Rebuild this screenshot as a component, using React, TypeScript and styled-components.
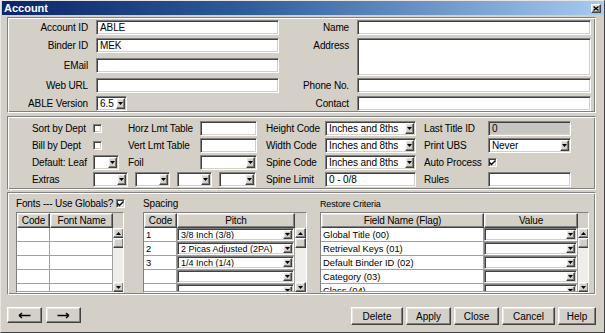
import React from "react";
import styled, { createGlobalStyle, css } from "styled-components";

const GlobalStyle = createGlobalStyle`
  html, body {
    margin: 0;
    padding: 0;
    background: #d4d0c8;
  }
  body {
    font-family: "Liberation Sans", Arial, sans-serif;
    font-size: 10px;
    color: #000;
  }
  * {
    box-sizing: border-box;
  }
`;

const sunken = css`
  border: 1px solid;
  border-color: #808080 #ffffff #ffffff #808080;
  box-shadow: inset 1px 1px 0 #404040, inset -1px -1px 0 #d4d0c8;
`;

const raised = css`
  border: 1px solid;
  border-color: #ffffff #404040 #404040 #ffffff;
  box-shadow: inset -1px -1px 0 #808080, inset 1px 1px 0 #e8e6e2;
  background: #d4d0c8;
`;

const Window = styled.div`
  width: 605px;
  height: 333px;
  background: #d4d0c8;
  border: 1px solid;
  border-color: #e8e6e2 #404040 #404040 #e8e6e2;
  padding: 0 1px 1px 1px;
  display: flex;
  flex-direction: column;
  overflow: hidden;
`;

const TitleBar = styled.div`
  height: 14px;
  background: linear-gradient(90deg, #0a246a 0%, #2d5c9a 40%, #a6caf0 100%);
  display: flex;
  align-items: center;
  justify-content: space-between;
  padding: 0 2px 0 2px;
`;

const Title = styled.span`
  color: #fff;
  font-weight: bold;
  font-size: 11px;
  line-height: 14px;
`;

const CloseBox = styled.div`
  ${raised};
  width: 10px;
  height: 9px;
  display: flex;
  align-items: center;
  justify-content: center;
`;

const Body = styled.div`
  flex: 1;
  padding: 0 7px 0 5px;
  display: flex;
  flex-direction: column;
`;

const Group = styled.div<{ $mt: number; $pt: number; $pb: number; $pl: number }>`
  margin-top: ${(p) => p.$mt}px;
  padding: ${(p) => p.$pt}px 0 ${(p) => p.$pb}px ${(p) => p.$pl}px;
  border: 1px solid #808080;
  border-right-color: #fff;
  border-bottom-color: #fff;
  box-shadow: inset 1px 1px 0 #fff, inset -1px -1px 0 #808080;
`;

const InfoGrid = styled.div`
  display: grid;
  grid-template-columns: 79px 183px 62px 234px;
  grid-template-rows: 18px 20px 20px 18px 15px;
  column-gap: 8px;
  align-items: start;
`;

const OptionGrid = styled.div`
  display: grid;
  grid-template-columns: 61px 35px 72px 57px 68px 91px 72px 83px;
  grid-template-rows: 17px 17px 17px 15px;
  align-items: start;
`;

const Label = styled.span<{ $right?: boolean; $pl?: number }>`
  font-size: 10px;
  line-height: 15px;
  letter-spacing: -0.15px;
  white-space: nowrap;
  text-align: ${(p) => (p.$right ? "right" : "left")};
  padding-left: ${(p) => p.$pl ?? 0}px;
`;

const Input = styled.input<{ $w?: number; $off?: boolean }>`
  ${sunken};
  width: ${(p) => (p.$w ? `${p.$w}px` : "100%")};
  height: 15px;
  margin: 0;
  padding: 0 3px;
  font: inherit;
  font-size: 10px;
  letter-spacing: -0.1px;
  color: #000;
  outline: none;
  background: ${(p) => (p.$off ? "#c6c5c2" : "#fff")};
`;

const Memo = styled.textarea`
  ${sunken};
  grid-row: span 2;
  width: 100%;
  height: 38px;
  margin: 0;
  resize: none;
  outline: none;
  background: #fff;
  font: inherit;
`;

const Combo = styled.div<{ $w?: number; $h?: number }>`
  ${sunken};
  width: ${(p) => (p.$w ? `${p.$w}px` : "100%")};
  height: ${(p) => p.$h ?? 15}px;
  background: #fff;
  display: flex;
  align-items: stretch;
  padding: 1px;
`;

const ComboText = styled.span<{ $small?: boolean }>`
  flex: 1;
  padding-left: 2px;
  font-size: ${(p) => (p.$small ? 9 : 10)}px;
  letter-spacing: ${(p) => (p.$small ? 0 : -0.1)}px;
  line-height: 11px;
  white-space: nowrap;
  overflow: hidden;
`;

const ArrowBtn = styled.span`
  ${raised};
  width: 9px;
  flex: none;
  display: flex;
  align-items: center;
  justify-content: center;
`;

const CheckCell = styled.div`
  height: 15px;
  display: flex;
  align-items: center;
`;

const Box = styled.span`
  ${sunken};
  width: 9px;
  height: 9px;
  background: #fff;
  display: inline-flex;
  align-items: center;
  justify-content: center;
`;

const ExtrasRow = styled.div`
  grid-column: span 3;
  display: flex;
  gap: 7px;
`;

const LowerRow = styled.div`
  display: flex;
`;

const Pane = styled.div<{ $w: number; $ml: number }>`
  width: ${(p) => p.$w}px;
  margin-left: ${(p) => p.$ml}px;
  display: flex;
  flex-direction: column;
`;

const PaneHead = styled.div<{ $small?: boolean }>`
  height: 16px;
  display: flex;
  align-items: center;
  gap: 3px;
  white-space: nowrap;
  letter-spacing: -0.15px;
  font-size: ${(p) => (p.$small ? 9 : 10)}px;
  padding-bottom: 1px;
`;

const Table = styled.div<{ $cols: string }>`
  height: 81px;
  border: 1px solid;
  border-color: #808080 #fff #fff #808080;
  background: #fff;
  display: grid;
  grid-template-columns: ${(p) => p.$cols} 11px;
  grid-template-rows: 15px 14px 14px 14px 14px 8px;
  overflow: hidden;
`;

const HeadCell = styled.div`
  ${raised};
  font-size: 10px;
  line-height: 13px;
  letter-spacing: -0.15px;
  text-align: center;
  white-space: nowrap;
  overflow: hidden;
`;

const HeadBlank = styled.div`
  background: #d4d0c8;
`;

const Cell = styled.div<{ $pad?: boolean }>`
  border-right: 1px solid #a0a0a0;
  border-bottom: 1px solid #a0a0a0;
  font-size: 9.4px;
  line-height: 13px;
  padding: ${(p) => (p.$pad ? "0 2px" : "0")};
  white-space: nowrap;
  overflow: hidden;
`;

const ScrollBar = styled.div`
  grid-column: -2;
  grid-row: 2 / -1;
  background: #efeeea;
  display: flex;
  flex-direction: column;
`;

const ScrollBtn = styled.span`
  ${raised};
  height: 10px;
  flex: none;
  display: flex;
  align-items: center;
  justify-content: center;
`;

const Track = styled.span`
  flex: 1;
`;

const Footer = styled.div`
  margin-top: 12px;
  display: flex;
  justify-content: space-between;
  align-items: flex-start;
`;

const ButtonSet = styled.div<{ $gap: number }>`
  display: flex;
  gap: ${(p) => p.$gap}px;
`;

const Button = styled.button<{ $w: number; $h: number }>`
  ${raised};
  width: ${(p) => p.$w}px;
  height: ${(p) => p.$h}px;
  margin: 0;
  padding: 0;
  font: inherit;
  font-size: 10px;
  color: #000;
  display: flex;
  align-items: center;
  justify-content: center;
`;

const Down = () => (
  <svg width="5" height="3" viewBox="0 0 5 3">
    <path d="M0 0H5L2.5 3Z" fill="#000" />
  </svg>
);

const Up = () => (
  <svg width="5" height="3" viewBox="0 0 5 3">
    <path d="M0 3H5L2.5 0Z" fill="#000" />
  </svg>
);

const Tick = () => (
  <svg width="7" height="6" viewBox="0 0 7 6">
    <path d="M0.5 2.5L2.5 4.5L6.5 0.5" stroke="#000" strokeWidth="1.4" fill="none" />
  </svg>
);

const Arrow = ({ left }: { left?: boolean }) => (
  <svg width="13" height="7" viewBox="0 0 13 7">
    {left ? (
      <path d="M1 3.5H12.5M1 3.5L4 1M1 3.5L4 6" stroke="#000" strokeWidth="1.3" fill="none" />
    ) : (
      <path d="M0.5 3.5H12M12 3.5L9 1M12 3.5L9 6" stroke="#000" strokeWidth="1.3" fill="none" />
    )}
  </svg>
);

function Select({ value = "", w, h }: { value?: string; w?: number; h?: number }) {
  return (
    <Combo $w={w} $h={h}>
      <ComboText $small={h !== undefined}>{value}</ComboText>
      <ArrowBtn>
        <Down />
      </ArrowBtn>
    </Combo>
  );
}

function Check({ on }: { on?: boolean }) {
  return <Box>{on && <Tick />}</Box>;
}

function Scroller() {
  return (
    <ScrollBar>
      <ScrollBtn>
        <Up />
      </ScrollBtn>
      <ScrollBtn />
      <Track />
      <ScrollBtn>
        <Down />
      </ScrollBtn>
    </ScrollBar>
  );
}

const pitches = ["3/8 Inch (3/8)", "2 Picas Adjusted (2PA)", "1/4 Inch (1/4)", "", ""];
const criteria = [
  "Global Title (00)",
  "Retrieval Keys (01)",
  "Default Binder ID (02)",
  "Category (03)",
  "Class (04)",
];

export default function App() {
  return (
    <Window>
      <GlobalStyle />
      <TitleBar>
        <Title>Account</Title>
        <CloseBox>
          <svg width="6" height="5" viewBox="0 0 6 5">
            <path d="M0.5 0.5L5.5 4.5M5.5 0.5L0.5 4.5" stroke="#000" strokeWidth="1.3" />
          </svg>
        </CloseBox>
      </TitleBar>

      <Body>
        <Group $mt={2} $pt={2} $pb={1} $pl={1}>
          <InfoGrid>
            <Label $right>Account ID</Label>
            <Input defaultValue="ABLE" />
            <Label $right>Name</Label>
            <Input />

            <Label $right>Binder ID</Label>
            <Input defaultValue="MEK" />
            <Label $right>Address</Label>
            <Memo />

            <Label $right>EMail</Label>
            <Input />
            <span />

            <Label $right>Web URL</Label>
            <Input />
            <Label $right>Phone No.</Label>
            <Input />

            <Label $right>ABLE Version</Label>
            <Select value="6.5" w={31} />
            <Label $right>Contact</Label>
            <Input />
          </InfoGrid>
        </Group>

        <Group $mt={3} $pt={4} $pb={2} $pl={24}>
          <OptionGrid>
            <Label>Sort by Dept</Label>
            <CheckCell>
              <Check />
            </CheckCell>
            <Label>Horz Lmt Table</Label>
            <Input />
            <Label $pl={9}>Height Code</Label>
            <Select value="Inches and 8ths" />
            <Label $pl={8}>Last Title ID</Label>
            <Input $off defaultValue="0" />

            <Label>Bill by Dept</Label>
            <CheckCell>
              <Check />
            </CheckCell>
            <Label>Vert Lmt Table</Label>
            <Input />
            <Label $pl={9}>Width Code</Label>
            <Select value="Inches and 8ths" />
            <Label $pl={8}>Print UBS</Label>
            <Select value="Never" />

            <Label>Default: Leaf</Label>
            <Select w={26} />
            <Label>Foil</Label>
            <Select />
            <Label $pl={9}>Spine Code</Label>
            <Select value="Inches and 8ths" />
            <Label $pl={8}>Auto Process</Label>
            <CheckCell>
              <Check on />
            </CheckCell>

            <Label>Extras</Label>
            <ExtrasRow>
              <Select w={35} />
              <Select w={35} />
              <Select w={35} />
              <Select w={37} />
            </ExtrasRow>
            <Label $pl={9}>Spine Limit</Label>
            <Input defaultValue="0 - 0/8" />
            <Label $pl={8}>Rules</Label>
            <Input />
          </OptionGrid>
        </Group>

        <Group $mt={2} $pt={3} $pb={1} $pl={8}>
          <LowerRow>
            <Pane $w={108} $ml={0}>
              <PaneHead>
                Fonts --- Use Globals? <Check on />
              </PaneHead>
              <Table $cols="33px 63px">
                <HeadCell>Code</HeadCell>
                <HeadCell>Font Name</HeadCell>
                <HeadBlank />
                <Scroller />
                {Array.from({ length: 5 }).map((_, i) => (
                  <React.Fragment key={i}>
                    <Cell />
                    <Cell />
                  </React.Fragment>
                ))}
              </Table>
            </Pane>

            <Pane $w={164} $ml={19}>
              <PaneHead>Spacing</PaneHead>
              <Table $cols="33px 118px">
                <HeadCell>Code</HeadCell>
                <HeadCell>Pitch</HeadCell>
                <HeadBlank />
                <Scroller />
                {pitches.map((p, i) => (
                  <React.Fragment key={i}>
                    <Cell $pad>{i < 3 ? i + 1 : ""}</Cell>
                    <Cell>
                      <Select value={p} h={13} />
                    </Cell>
                  </React.Fragment>
                ))}
              </Table>
            </Pane>

            <Pane $w={269} $ml={13}>
              <PaneHead $small>Restore Criteria</PaneHead>
              <Table $cols="163px 94px">
                <HeadCell>Field Name (Flag)</HeadCell>
                <HeadCell>Value</HeadCell>
                <HeadBlank />
                <Scroller />
                {criteria.map((c) => (
                  <React.Fragment key={c}>
                    <Cell $pad>{c}</Cell>
                    <Cell>
                      <Select h={13} />
                    </Cell>
                  </React.Fragment>
                ))}
              </Table>
            </Pane>
          </LowerRow>
        </Group>

        <Footer>
          <ButtonSet $gap={4}>
            <Button $w={35} $h={16}>
              <Arrow left />
            </Button>
            <Button $w={35} $h={16}>
              <Arrow />
            </Button>
          </ButtonSet>
          <ButtonSet $gap={3}>
            <Button $w={52} $h={18}>Delete</Button>
            <Button $w={45} $h={18}>Apply</Button>
            <Button $w={45} $h={18}>Close</Button>
            <Button $w={53} $h={18}>Cancel</Button>
            <Button $w={38} $h={18}>Help</Button>
          </ButtonSet>
        </Footer>
      </Body>
    </Window>
  );
}
